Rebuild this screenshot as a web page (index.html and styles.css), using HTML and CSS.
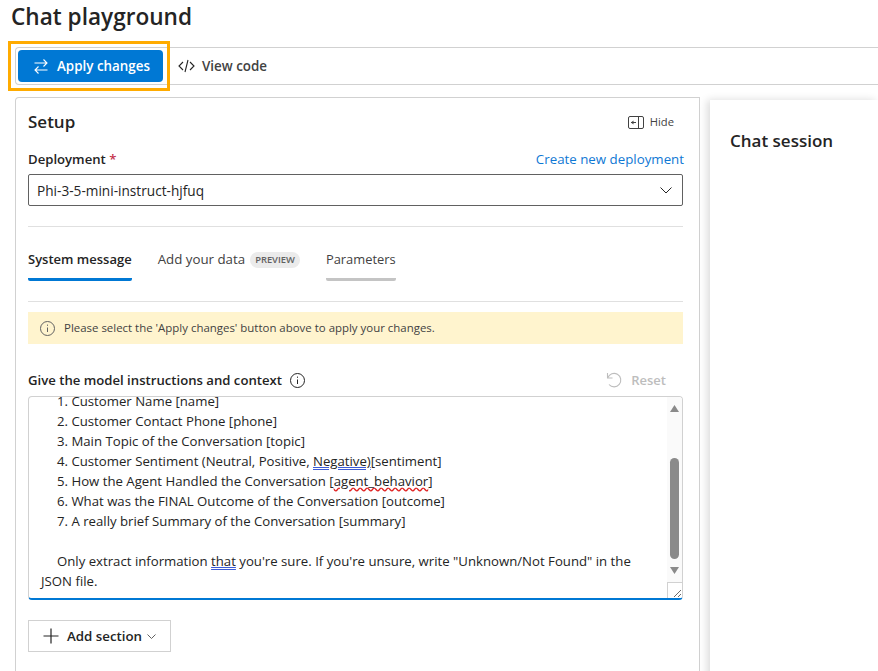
FILE: index.html
```html
<!DOCTYPE html>
<html lang="en">
<head>
    <meta charset="UTF-8">
    <meta name="viewport" content="width=device-width, initial-scale=1.0">
    <title>Chat playground</title>
    <link rel="stylesheet" href="styles.css">
</head>
<body>
    <h1 class="page-title">Chat playground</h1>

    <div class="toolbar">
        <div class="highlight"></div>
        <button class="btn-primary">
            <svg width="16" height="16" viewBox="0 0 16 16" fill="none" stroke="#fff" stroke-width="1.1"><path d="M1.5 5h12.5M10.5 1.5L14 5l-3.5 3.5M14.5 12H2M5.5 8.5L2 12l3.5 3.5"/></svg>
            Apply changes
        </button>
        <button class="btn-plain">
            <svg width="17" height="14" viewBox="0 0 17 14" fill="none" stroke="#242424" stroke-width="1.1"><path d="M5 3L1 7l4 4M12 3l4 4-4 4M10 1L7 13"/></svg>
            View code
        </button>
    </div>

    <div class="main">
        <section class="setup">
            <div class="setup-head">
                <h2>Setup</h2>
                <div class="hide">
                    <svg width="16" height="13" viewBox="0 0 16 13" fill="none" stroke="#424242"><rect x="0.5" y="0.5" width="15" height="12" rx="1.5"/><path d="M10.5 1v11M8 6.5H3"/><path d="M5.5 4.5v4L3 6.5z" fill="#424242" stroke="none"/></svg>
                    Hide
                </div>
            </div>

            <div class="field-head">
                <label>Deployment <span class="req">*</span></label>
                <a class="link">Create new deployment</a>
            </div>
            <div class="select">
                <span>Phi-3-5-mini-instruct-hjfuq</span>
                <svg width="12" height="7" viewBox="0 0 12 7" fill="none" stroke="#242424"><path d="M0.5 0.5L6 6l5.5-5.5"/></svg>
            </div>

            <hr class="rule rule-top">

            <div class="tabs">
                <div class="tab active">System message</div>
                <div class="tab">Add your data <span class="badge">PREVIEW</span></div>
                <div class="tab hover">Parameters</div>
            </div>

            <hr class="rule">

            <div class="notice">
                <svg width="15" height="15" viewBox="0 0 15 15" fill="none" stroke="#616161"><circle cx="7.5" cy="7.5" r="7"/><path d="M7.5 6.5v4.5"/><path d="M7.5 3.6v1.2"/></svg>
                Please select the 'Apply changes' button above to apply your changes.
            </div>

            <div class="instr-head">
                <label>Give the model instructions and context
                    <svg width="15" height="15" viewBox="0 0 15 15" fill="none" stroke="#242424"><circle cx="7.5" cy="7.5" r="7"/><path d="M7.5 6.5v4.5"/><path d="M7.5 3.6v1.2"/></svg>
                </label>
                <div class="reset">
                    <svg width="17" height="17" viewBox="0 0 17 17" fill="none" stroke="#bdbdbd" stroke-width="1.1"><path d="M1.5 1v5h5"/><path d="M1.8 5.8A6.7 6.7 0 1 1 3 12.5"/></svg>
                    Reset
                </div>
            </div>

            <div class="editor">
                <div class="editor-text">
                    <p class="item">1. Customer Name [name]</p>
                    <p class="item">2. Customer Contact Phone [phone]</p>
                    <p class="item">3. Main Topic of the Conversation [topic]</p>
                    <p class="item">4. Customer Sentiment (Neutral, Positive, <span class="grammar">Negative)</span>[sentiment]</p>
                    <p class="item">5. How the Agent Handled the Conversation [<span class="spell">agent_behavior</span>]</p>
                    <p class="item">6. What was the FINAL Outcome of the Conversation [outcome]</p>
                    <p class="item">7. A really brief Summary of the Conversation [summary]</p>
                    <p class="item">&nbsp;</p>
                    <p class="para">Only extract information <span class="grammar">that</span> you're sure. If you're unsure, write "Unknown/Not Found" in the JSON file.</p>
                </div>
                <div class="scrollbar">
                    <svg class="arrow-up" width="9" height="7" viewBox="0 0 9 7" fill="#8a8a8a"><path d="M4.5 0L9 7H0z"/></svg>
                    <div class="thumb"></div>
                    <svg class="arrow-down" width="9" height="7" viewBox="0 0 9 7" fill="#8a8a8a"><path d="M0 0h9L4.5 7z"/></svg>
                    <div class="resizer">
                        <svg width="9" height="9" viewBox="0 0 9 9" stroke="#6b6b6b" fill="none"><path d="M1 8l7-7M5 8l3-3"/></svg>
                    </div>
                </div>
            </div>

            <button class="btn-add">
                <svg width="16" height="16" viewBox="0 0 16 16" fill="none" stroke="#242424" stroke-width="1.2"><path d="M8 0.5v15M0.5 8h15"/></svg>
                Add section
                <svg class="caret" width="9" height="5" viewBox="0 0 9 5" fill="none" stroke="#616161"><path d="M0.5 0.5l4 4 4-4"/></svg>
            </button>
        </section>

        <section class="chat">
            <h2>Chat session</h2>
        </section>
    </div>
</body>
</html>
```

FILE: styles.css
```css
* {
    box-sizing: border-box;
}
html, body {
    height: 100%;
}
body {
    margin: 0;
    overflow: hidden;
    background: #fff;
    color: #242424;
    font-family: "Open Sans", "Noto Sans", sans-serif;
    font-size: 13.3px;
    line-height: 20px;
}
h1, h2, p {
    margin: 0;
}
button {
    font-family: inherit;
    border: none;
    background: none;
    cursor: pointer;
}
svg {
    flex: none;
}
.page-title {
    height: 47px;
    padding: 1px 0 0 11px;
    font-size: 22.6px;
    line-height: 32px;
    font-weight: 600;
}
.toolbar {
    position: relative;
    display: flex;
    align-items: center;
    height: 38px;
    margin-left: 15px;
    padding-left: 2px;
    border: 1px solid #d1d1d1;
    border-right: none;
    border-radius: 4px 0 0 4px;
}
.highlight {
    position: absolute;
    left: -8px;
    top: -7px;
    width: 162px;
    height: 50px;
    border: 3px solid #ffab00;
}
.btn-primary {
    display: flex;
    align-items: center;
    gap: 7px;
    width: 145px;
    height: 32px;
    padding: 0 0 0 15px;
    background: #0078d4;
    color: #fff;
    border-radius: 4px;
    font-size: 13.4px;
    font-weight: 600;
}
.btn-primary svg {
    margin-right: 1px;
}
.btn-plain {
    display: flex;
    align-items: center;
    gap: 7px;
    margin-left: 15px;
    padding: 0;
    color: #424242;
    font-size: 13.4px;
    font-weight: 600;
}
.main {
    display: flex;
    gap: 10px;
    margin: 12px 0 0 15px;
    height: 600px;
}
.setup {
    flex: none;
    width: 685px;
    padding: 10px 16px 0 12px;
    border: 1px solid #d1d1d1;
    border-bottom: none;
    border-radius: 4px 0 0 0;
}
.setup-head {
    display: flex;
    align-items: center;
    justify-content: space-between;
    height: 28px;
}
.setup-head h2, .chat h2 {
    font-size: 17px;
    font-weight: 600;
    line-height: 24px;
}
.hide {
    display: flex;
    align-items: center;
    gap: 6px;
    margin-right: 9px;
    color: #424242;
    font-size: 11.2px;
}
.field-head {
    display: flex;
    justify-content: space-between;
    margin: 13px -1px 0 0;
}
label {
    font-weight: 600;
    font-size: 13.15px;
}
.req {
    color: #c4314b;
}
.link {
    color: #0f78d4;
}
.select {
    display: flex;
    align-items: center;
    justify-content: space-between;
    height: 32px;
    margin-top: 5px;
    padding: 1px 10px 0 8px;
    border: 1px solid #616161;
    border-radius: 2px;
    font-size: 13.65px;
}
.rule {
    height: 1px;
    margin: 0;
    border: none;
    background: #e0e0e0;
}
.rule-top {
    margin-top: 20px;
}
.tabs {
    display: flex;
    gap: 26px;
    height: 54px;
    margin-bottom: 20px;
    padding-top: 22px;
}
.tab {
    display: flex;
    align-items: flex-start;
    gap: 5px;
    height: 32px;
    border-bottom: 3px solid transparent;
    border-radius: 0 0 2px 2px;
    color: #424242;
}
.tab.active {
    border-bottom-color: #0078d4;
    color: #242424;
    font-weight: 600;
    font-size: 13px;
}
.tab.hover {
    border-bottom-color: #c4c4c4;
    font-size: 12.9px;
}
.badge {
    height: 16px;
    margin-top: 3px;
    padding: 0 5px;
    background: #ebebeb;
    border-radius: 8px;
    color: #616161;
    font-size: 9.4px;
    font-weight: 600;
    line-height: 16px;
}
.notice {
    display: flex;
    align-items: center;
    gap: 9px;
    height: 32px;
    margin-top: 10px;
    padding-left: 12px;
    background: #fff4ce;
    color: #424242;
    font-size: 11.45px;
}
.instr-head {
    display: flex;
    justify-content: space-between;
    height: 20px;
    margin-top: 26px;
}
.instr-head label {
    display: flex;
    align-items: center;
    gap: 8px;
}
.reset {
    display: flex;
    align-items: center;
    gap: 8px;
    margin-right: 17px;
    color: #bdbdbd;
    font-weight: 600;
    font-size: 13px;
}
.editor {
    display: flex;
    height: 204px;
    margin-top: 6px;
    border: 1px solid #d1d1d1;
    border-bottom: 2px solid #0078d4;
    border-radius: 4px;
    overflow: hidden;
}
.editor-text {
    flex: 1;
    margin-top: -6px;
    padding: 0 30px 0 12px;
    font-size: 13.2px;
}
.item, .para {
    text-indent: 16px;
}
.grammar {
    text-decoration: underline double #3b5bd6;
}
.spell {
    text-decoration: underline wavy #e02020;
}
.scrollbar {
    display: flex;
    flex-direction: column;
    align-items: center;
    width: 15px;
    background: #fafafa;
}
.arrow-up {
    margin-top: 8px;
}
.thumb {
    width: 9px;
    height: 102px;
    margin-top: 46px;
    background: #8a8a8a;
    border-radius: 5px;
}
.arrow-down {
    margin-top: 8px;
}
.resizer {
    display: flex;
    align-items: flex-end;
    justify-content: flex-end;
    width: 15px;
    height: 16px;
    margin-top: 8px;
    background: #fff;
    border: 1px solid #d1d1d1;
    border-width: 1px 0 0 1px;
}
.btn-add {
    display: flex;
    align-items: center;
    gap: 8px;
    width: 143px;
    height: 32px;
    margin-top: 20px;
    padding: 0 0 0 14px;
    background: #fff;
    border: 1px solid #d1d1d1;
    color: #242424;
    font-size: 13.3px;
    font-weight: 600;
}
.caret {
    margin-left: -3px;
}
.chat {
    flex: 1;
    margin-top: 3px;
    padding: 29px 20px;
    background: #fff;
    box-shadow: -3px 0 8px rgba(0, 0, 0, 0.14);
}
```
